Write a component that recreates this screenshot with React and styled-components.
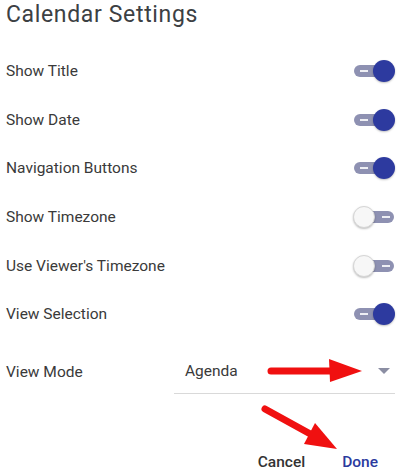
import React, { useState } from "react";
import styled, { createGlobalStyle } from "styled-components";

const GlobalStyle = createGlobalStyle`
  html, body {
    margin: 0;
    padding: 0;
    background: #ffffff;
  }
  body {
    font-family: Roboto, "Liberation Sans", Arial, sans-serif;
  }
`;

const StyledPage = styled.div`
  position: relative;
  width: 404px;
  height: 472px;
  overflow: hidden;
  padding: 0 9px 0 6px;
  box-sizing: border-box;
  background: #fff;
`;

const StyledTitle = styled.h1`
  margin: 0;
  height: 30px;
  line-height: 30px;
  font-size: 23px;
  font-weight: 400;
  letter-spacing: 0.65px;
  color: #3c4043;
`;

const StyledList = styled.div`
  margin-top: 17px;
  display: flex;
  flex-direction: column;
`;

const StyledRow = styled.div`
  height: 48.6px;
  display: flex;
  align-items: center;
  justify-content: space-between;
`;

const StyledLabel = styled.span`
  font-size: 15.5px;
  color: #3a3a3a;
`;

const StyledSwitch = styled.button`
  position: relative;
  width: 42px;
  height: 22px;
  padding: 0;
  border: none;
  background: transparent;
  cursor: pointer;
`;

const StyledTrack = styled.span`
  position: absolute;
  left: 1px;
  right: 1px;
  top: 5px;
  height: 12px;
  border-radius: 6px;
  background: #8e91b2;

  &::after {
    content: "";
    position: absolute;
    top: 5px;
    height: 2px;
    width: 8px;
    background: #ffffff;
    opacity: 0.85;
    ${({ $on }) => ($on ? "left: 6px;" : "right: 4px;")}
  }
`;

const StyledKnob = styled.span`
  position: absolute;
  top: 0;
  left: ${({ $on }) => ($on ? "20px" : "0")};
  width: 22px;
  height: 22px;
  border-radius: 50%;
  box-sizing: border-box;
  background: ${({ $on }) => ($on ? "#2d3a9f" : "#f7f7f7")};
  border: ${({ $on }) => ($on ? "none" : "1px solid #d6d6d6")};
  box-shadow: 0 1px 2px rgba(0, 0, 0, 0.25);
`;

const StyledSelectRow = styled.div`
  margin-top: 11px;
  display: flex;
  align-items: center;
`;

const StyledSelectLabel = styled(StyledLabel)`
  width: 168px;
  flex-shrink: 0;
`;

const StyledSelectField = styled.div`
  flex: 1;
  height: 43px;
  display: flex;
  align-items: center;
  justify-content: space-between;
  padding: 0 5px 0 11px;
  border-bottom: 1px solid #d9d9d9;
  font-size: 15.5px;
  color: #3a3a3a;
`;

const StyledCaret = styled.span`
  width: 0;
  height: 0;
  border-left: 6px solid transparent;
  border-right: 6px solid transparent;
  border-top: 6px solid #8b8ea3;
`;

const StyledActions = styled.div`
  margin-top: 50px;
  display: flex;
  justify-content: flex-end;
  gap: 21px;
  padding-right: 9px;
`;

const StyledButton = styled.button`
  height: 36px;
  padding: 0 8px;
  border: none;
  background: transparent;
  font-family: Roboto, "Liberation Sans", Arial, sans-serif;
  font-size: 15.5px;
  font-weight: 500;
  color: ${({ $primary }) => ($primary ? "#2b3a9e" : "#333333")};
  cursor: pointer;
`;

const StyledOverlay = styled.svg`
  position: absolute;
  left: 0;
  top: 0;
  pointer-events: none;
`;

const SETTINGS = [
  { label: "Show Title", on: true },
  { label: "Show Date", on: true },
  { label: "Navigation Buttons", on: true },
  { label: "Show Timezone", on: false },
  { label: "Use Viewer's Timezone", on: false },
  { label: "View Selection", on: true },
];

const Switch = ({ on, onToggle }) => (
  <StyledSwitch onClick={onToggle} aria-pressed={on}>
    <StyledTrack $on={on} />
    <StyledKnob $on={on} />
  </StyledSwitch>
);

const App = () => {
  const [settings, setSettings] = useState(SETTINGS);

  const toggle = (i) =>
    setSettings((prev) =>
      prev.map((s, idx) => (idx === i ? { ...s, on: !s.on } : s))
    );

  return (
    <>
      <GlobalStyle />
      <StyledPage>
        <StyledTitle>Calendar Settings</StyledTitle>
        <StyledList>
          {settings.map((s, i) => (
            <StyledRow key={s.label}>
              <StyledLabel>{s.label}</StyledLabel>
              <Switch on={s.on} onToggle={() => toggle(i)} />
            </StyledRow>
          ))}
        </StyledList>
        <StyledSelectRow>
          <StyledSelectLabel>View Mode</StyledSelectLabel>
          <StyledSelectField>
            <span>Agenda</span>
            <StyledCaret />
          </StyledSelectField>
        </StyledSelectRow>
        <StyledActions>
          <StyledButton>Cancel</StyledButton>
          <StyledButton $primary>Done</StyledButton>
        </StyledActions>

        {/* red annotation arrows */}
        <StyledOverlay width="404" height="472" viewBox="0 0 404 472">
          <line
            x1="271"
            y1="371"
            x2="332"
            y2="371"
            stroke="#f01010"
            strokeWidth="7"
            strokeLinecap="round"
          />
          <polygon points="329,359 362,371 330,382" fill="#f01010" />
          <line
            x1="265"
            y1="409"
            x2="314"
            y2="436"
            stroke="#f01010"
            strokeWidth="7"
            strokeLinecap="round"
          />
          <polygon points="315,423 337,449 304,444" fill="#f01010" />
        </StyledOverlay>
      </StyledPage>
    </>
  );
};

export default App;
